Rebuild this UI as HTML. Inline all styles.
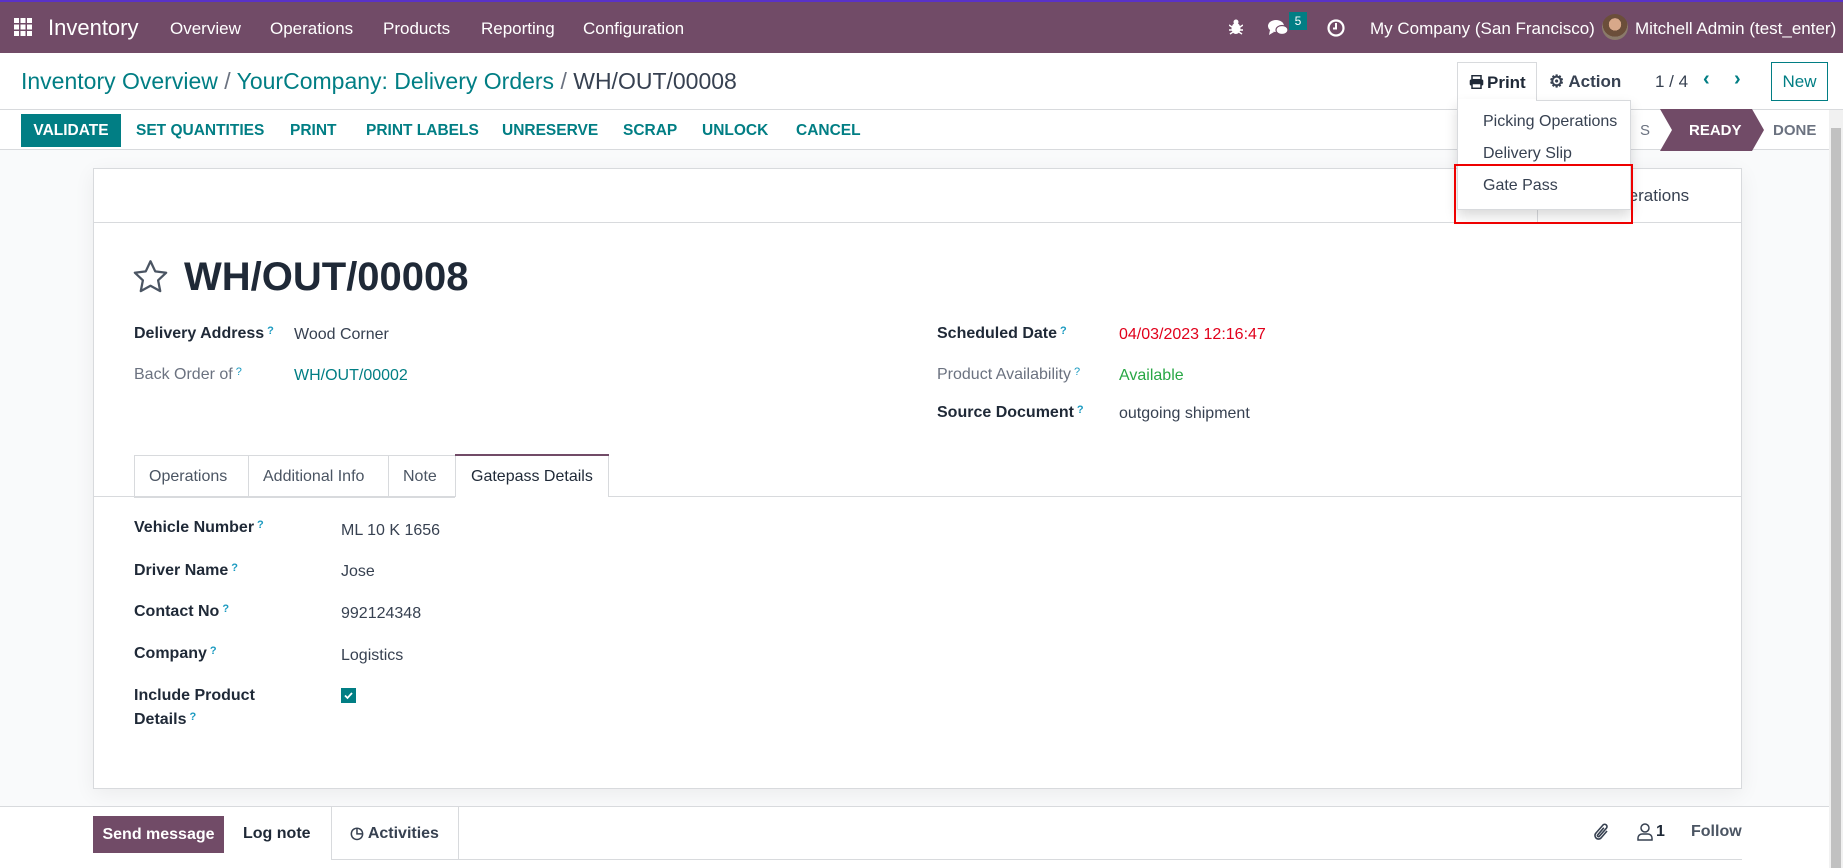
<!DOCTYPE html>
<html><head><meta charset="utf-8">
<style>
*{margin:0;padding:0;box-sizing:border-box}
body{width:1843px;height:868px;overflow:hidden;background:#f9fafb;font-family:"Liberation Sans",sans-serif;position:relative;color:#374151}
.a{position:absolute;white-space:nowrap}
.nav{position:absolute;left:0;top:0;width:1843px;height:53px;background:#714b67;border-top:2px solid #5a32c8}
.nav .a{color:#fff;font-size:17px;top:17px}
.q{color:#1a9ac0;font-size:11px;vertical-align:top;margin-left:3px}
.lbl{font-size:16px;font-weight:bold;color:#1f2937}
.val{font-size:16px;color:#374151}
.btn{font-size:15.5px;font-weight:bold;color:#017e84;top:122px}
</style></head><body>
<div class="nav">
  <svg class="a" style="left:14px;top:16px" width="18" height="18" viewBox="0 0 18 18" fill="#fff"><rect x="0" y="0" width="5" height="5"/><rect x="6.5" y="0" width="5" height="5"/><rect x="13" y="0" width="5" height="5"/><rect x="0" y="6.5" width="5" height="5"/><rect x="6.5" y="6.5" width="5" height="5"/><rect x="13" y="6.5" width="5" height="5"/><rect x="0" y="13" width="5" height="5"/><rect x="6.5" y="13" width="5" height="5"/><rect x="13" y="13" width="5" height="5"/></svg>
  <div class="a" style="left:48px;top:13px;font-size:22px">Inventory</div>
  <div class="a" style="left:170px">Overview</div>
  <div class="a" style="left:270px">Operations</div>
  <div class="a" style="left:383px">Products</div>
  <div class="a" style="left:481px">Reporting</div>
  <div class="a" style="left:583px">Configuration</div>
  <svg class="a" style="left:1229px;top:17px" width="14" height="16" viewBox="0 0 14 16" fill="#fff"><ellipse cx="7" cy="9.5" rx="4.5" ry="5.5"/><circle cx="7" cy="3" r="2.5"/><path d="M0 6l3 2M14 6l-3 2M0 11h3M14 11h-3M1 15l3-2M13 15l-3-2" stroke="#fff" stroke-width="1.5"/></svg>
  <svg class="a" style="left:1268px;top:17px" width="22" height="18" viewBox="0 0 22 18" fill="#fff"><ellipse cx="8" cy="7" rx="8" ry="6"/><path d="M2 11l-1 5 5-3z"/><ellipse cx="14" cy="11" rx="6" ry="4.5" stroke="#714b67" stroke-width="1.2"/></svg>
  <div class="a" style="left:1289px;top:10px;width:18px;height:18px;background:#017e84;color:#fff;font-size:12px;text-align:center;line-height:18px">5</div>
  <svg class="a" style="left:1327px;top:17px" width="18" height="18" viewBox="0 0 18 18"><circle cx="9" cy="9" r="7.5" fill="none" stroke="#fff" stroke-width="2.2"/><path d="M9 4v5.5h-3" stroke="#fff" stroke-width="2" fill="none"/></svg>
  <div class="a" style="left:1370px">My Company (San Francisco)</div>
  <div class="a" style="left:1602px;top:12px;width:26px;height:26px;border-radius:50%;background:radial-gradient(circle at 50% 40%,#d8a88a 0 30%,#6b4e3a 31% 60%,#8a7a6a 61%)"></div>
  <div class="a" style="left:1635px">Mitchell Admin (test_enter)</div>
</div>
<div class="a" style="left:0;top:53px;width:1843px;height:97px;background:#fff;border-bottom:1px solid #d8dadd"></div>
<div class="a" style="left:0;top:109px;width:1843px;height:1px;background:#d8dadd"></div>
<div class="a" style="left:21px;top:68px;font-size:23px;color:#017e84">Inventory Overview <span style="color:#6b7280">/</span> YourCompany: Delivery Orders <span style="color:#6b7280">/</span> <span style="color:#374151">WH/OUT/00008</span></div>
<div class="a" style="left:1457px;top:62px;width:80px;height:40px;border:1px solid #d8dadd;border-bottom:none;background:#fff;font-size:17px;font-weight:bold;color:#1f2937;padding:10px 0 0 11px">
<svg width="15" height="14" viewBox="0 0 15 14" style="vertical-align:-1px;margin-right:3px"><rect x="3" y="0.7" width="9" height="4" fill="none" stroke="#1f2937" stroke-width="1.5"/><rect x="0.7" y="4.5" width="13.6" height="6" rx="1.5" fill="#1f2937"/><rect x="3" y="8.5" width="9" height="4.8" fill="#fff" stroke="#1f2937" stroke-width="1.5"/></svg>Print</div>
<div class="a" style="left:1549px;top:72px;font-size:17px;font-weight:bold;color:#374151">⚙ Action</div>
<div class="a" style="left:1655px;top:72px;font-size:17px;color:#374151">1 / 4</div>
<div class="a" style="left:1703px;top:68px;font-size:20px;font-weight:bold;color:#017e84">‹</div>
<div class="a" style="left:1734px;top:68px;font-size:20px;font-weight:bold;color:#017e84">›</div>
<div class="a" style="left:1771px;top:62px;width:57px;height:39px;border:1px solid #017e84;color:#017e84;font-size:17px;text-align:center;line-height:37px">New</div>
<div class="a" style="left:21px;top:114px;width:100px;height:33px;background:#017e84;color:#fff;font-size:15.5px;font-weight:bold;text-align:center;line-height:33px">VALIDATE</div>
<div class="a btn" style="left:136px">SET QUANTITIES</div>
<div class="a btn" style="left:290px">PRINT</div>
<div class="a btn" style="left:366px">PRINT LABELS</div>
<div class="a btn" style="left:502px">UNRESERVE</div>
<div class="a btn" style="left:623px">SCRAP</div>
<div class="a btn" style="left:702px">UNLOCK</div>
<div class="a btn" style="left:796px">CANCEL</div>
<svg class="a" style="left:1660px;top:109px" width="110" height="42"><polygon points="0,0 92,0 104,21 92,42 0,42 12,21" fill="#714b67"/></svg>
<div class="a" style="left:1640px;top:122px;font-size:15px;color:#6b7280">S</div>
<div class="a" style="left:1689px;top:122px;font-size:15px;font-weight:bold;color:#fff">READY</div>
<div class="a" style="left:1773px;top:122px;font-size:15px;font-weight:bold;color:#6b7280">DONE</div>
<div class="a" style="left:1829px;top:110px;width:14px;height:758px;background:#f1f1f1"></div>
<div class="a" style="left:1831px;top:128px;width:10px;height:740px;background:#c1c1c1"></div>
<!-- sheet -->
<div class="a" style="left:93px;top:168px;width:1649px;height:621px;background:#fff;border:1px solid #d8dadd;box-shadow:0 5px 20px rgba(0,0,0,.06)"></div>
<div class="a" style="left:93px;top:222px;width:1649px;height:1px;background:#d8dadd"></div>
<div class="a" style="left:1537px;top:168px;width:1px;height:55px;background:#d8dadd"></div>
<div class="a" style="left:1606px;top:186px;font-size:17px;color:#374151">Operations</div>
<svg class="a" style="left:132px;top:259px" width="37" height="35" viewBox="0 0 24 23"><path d="M12 1.5l3.1 6.6 7.2.9-5.3 5 1.4 7.1L12 17.6l-6.4 3.5 1.4-7.1-5.3-5 7.2-.9z" fill="none" stroke="#4b5563" stroke-width="1.5" stroke-linejoin="round"/></svg>
<div class="a" style="left:184px;top:255px;font-size:40px;font-weight:bold;color:#1f2937">WH/OUT/00008</div>
<div class="a lbl" style="left:134px;top:325px">Delivery Address<span class="q">?</span></div>
<div class="a val" style="left:294px;top:326px">Wood Corner</div>
<div class="a" style="left:134px;top:366px;font-size:16px;color:#6b7280">Back Order of<span class="q">?</span></div>
<div class="a val" style="left:294px;top:367px;color:#017e84">WH/OUT/00002</div>
<div class="a lbl" style="left:937px;top:325px">Scheduled Date<span class="q">?</span></div>
<div class="a val" style="left:1119px;top:326px;color:#e1001b">04/03/2023 12:16:47</div>
<div class="a" style="left:937px;top:366px;font-size:16px;color:#6b7280">Product Availability<span class="q">?</span></div>
<div class="a val" style="left:1119px;top:367px;color:#28a745">Available</div>
<div class="a lbl" style="left:937px;top:404px">Source Document<span class="q">?</span></div>
<div class="a val" style="left:1119px;top:405px">outgoing shipment</div>
<!-- tabs -->
<div class="a" style="left:93px;top:496px;width:1649px;height:1px;background:#d8dadd"></div>
<div class="a" style="left:134px;top:455px;width:475px;height:42px;border:1px solid #d8dadd;border-bottom:none;background:#fff"></div>
<div class="a" style="left:248px;top:455px;width:1px;height:41px;background:#d8dadd"></div>
<div class="a" style="left:388px;top:455px;width:1px;height:41px;background:#d8dadd"></div>
<div class="a" style="left:455px;top:455px;width:1px;height:42px;background:#d8dadd"></div>
<div class="a" style="left:455px;top:454px;width:154px;height:2px;background:#714b67"></div>
<div class="a" style="left:134px;top:496px;width:321px;height:2px;background:#d8dadd"></div>
<div class="a" style="left:149px;top:468px;font-size:16px;color:#4b5563">Operations</div>
<div class="a" style="left:263px;top:468px;font-size:16px;color:#4b5563">Additional Info</div>
<div class="a" style="left:403px;top:468px;font-size:16px;color:#4b5563">Note</div>
<div class="a" style="left:471px;top:468px;font-size:16px;color:#1f2937">Gatepass Details</div>
<div class="a lbl" style="left:134px;top:519px">Vehicle Number<span class="q">?</span></div>
<div class="a val" style="left:341px;top:522px">ML 10 K 1656</div>
<div class="a lbl" style="left:134px;top:562px">Driver Name<span class="q">?</span></div>
<div class="a val" style="left:341px;top:563px">Jose</div>
<div class="a lbl" style="left:134px;top:603px">Contact No<span class="q">?</span></div>
<div class="a val" style="left:341px;top:605px">992124348</div>
<div class="a lbl" style="left:134px;top:645px">Company<span class="q">?</span></div>
<div class="a val" style="left:341px;top:647px">Logistics</div>
<div class="a lbl" style="left:134px;top:687px">Include Product</div>
<div class="a lbl" style="left:134px;top:711px">Details<span class="q">?</span></div>
<div class="a" style="left:341px;top:688px;width:15px;height:15px;background:#017e84"><svg width="15" height="15"><path d="M4 7.5l2.5 2.5 4.5-5" stroke="#fff" stroke-width="1.8" fill="none"/></svg></div>
<!-- chatter -->
<div class="a" style="left:0;top:806px;width:1829px;height:62px;background:#fff;border-top:1px solid #d8dadd"></div>
<div class="a" style="left:93px;top:816px;width:131px;height:37px;background:#714b67;color:#fff;font-size:16px;font-weight:bold;text-align:center;line-height:37px">Send message</div>
<div class="a" style="left:243px;top:825px;font-size:16px;font-weight:bold;color:#1f2937">Log note</div>
<div class="a" style="left:331px;top:806px;width:128px;height:54px;border-left:1px solid #d8dadd;border-right:1px solid #d8dadd;border-bottom:1px solid #d8dadd"></div>
<div class="a" style="left:350px;top:823px;font-size:16px;font-weight:bold;color:#374151">◷ Activities</div>
<div class="a" style="left:459px;top:859px;width:1283px;height:1px;background:#d8dadd"></div>
<svg class="a" style="left:1593px;top:822px" width="18" height="20" viewBox="0 0 18 20"><path d="M14 9l-6 7a3.5 3.5 0 0 1-5-5l7-8a2.3 2.3 0 0 1 3.3 3.3l-7 8a1 1 0 0 1-1.5-1.5l6-7" fill="none" stroke="#374151" stroke-width="1.6"/></svg>
<svg class="a" style="left:1637px;top:823px" width="16" height="18" viewBox="0 0 16 18"><circle cx="8" cy="5" r="4" fill="none" stroke="#374151" stroke-width="1.5"/><path d="M1 17v-2a4 4 0 0 1 4-4h6a4 4 0 0 1 4 4v2z" fill="none" stroke="#374151" stroke-width="1.5"/></svg>
<div class="a" style="left:1656px;top:823px;font-size:16px;font-weight:bold;color:#1f2937">1</div>
<div class="a" style="left:1691px;top:823px;font-size:16px;font-weight:bold;color:#4b5563">Follow</div>
<!-- dropdown -->
<div class="a" style="left:1457px;top:100px;width:174px;height:110px;background:#fff;border:1px solid #d8dadd;box-shadow:0 6px 12px rgba(0,0,0,.15)"></div>
<div class="a" style="left:1458px;top:99px;width:78px;height:2px;background:#fff"></div>
<div class="a" style="left:1483px;top:113px;font-size:16px;color:#374151">Picking Operations</div>
<div class="a" style="left:1483px;top:145px;font-size:16px;color:#374151">Delivery Slip</div>
<div class="a" style="left:1483px;top:177px;font-size:16px;color:#374151">Gate Pass</div>
<div class="a" style="left:1454px;top:164px;width:179px;height:60px;border:2px solid #ee0000"></div>
</body></html>
